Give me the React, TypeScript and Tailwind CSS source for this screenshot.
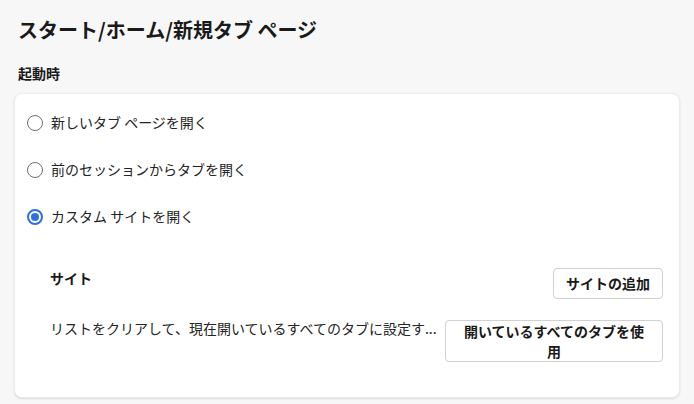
import { useState } from 'react';

const FONT = "font-['Noto_Sans_CJK_JP','Noto_Sans',sans-serif]";

const OPTIONS = [
  { id: 'newtab', label: '新しいタブ ページを開く' },
  { id: 'previous', label: '前のセッションからタブを開く' },
  { id: 'custom', label: 'カスタム サイトを開く' },
];

function Radio({ checked }: { checked: boolean }) {
  return checked ? (
    <span className="flex h-4 w-4 shrink-0 items-center justify-center rounded-full border-2 border-[#2f6fdf]">
      <span className="h-2 w-2 rounded-full bg-[#2f6fdf]" />
    </span>
  ) : (
    <span className="h-4 w-4 shrink-0 rounded-full border border-[#6f6f6f]" />
  );
}

export default function App() {
  const [selected, setSelected] = useState('custom');

  return (
    <div className={`min-h-[404px] bg-[#f7f7f7] px-[14px] pt-4 text-[#1a1a1a] ${FONT}`}>
      <h1 className="pl-1 text-[20px] font-bold leading-[28px]">スタート/ホーム/新規タブ ページ</h1>
      <h2 className="mt-[19px] mb-[10px] pl-1 text-[14px] font-bold leading-5">起動時</h2>

      <section className="w-[666px] rounded-lg border border-[#ececec] bg-white pt-[5px] pb-[35px] shadow-[0_1px_2px_rgba(0,0,0,0.12)]">
        {OPTIONS.map((o) => (
          <label
            key={o.id}
            onClick={() => setSelected(o.id)}
            className="flex h-[47px] cursor-pointer items-center gap-2 pl-3 text-[14px] text-[#242424]"
          >
            <Radio checked={selected === o.id} />
            {o.label}
          </label>
        ))}

        <div className="mt-[28px] pl-[35px] pr-4">
          <div className="flex items-start justify-between">
            <div className="text-[14px] font-bold leading-5">サイト</div>
            <button className="h-[31px] rounded border border-[#d1d1d1] bg-white px-3 text-[14px] font-bold text-[#1a1a1a]">
              サイトの追加
            </button>
          </div>
          <div className="mt-[21px] flex items-start justify-between gap-2">
            <p className="-mt-[2px] whitespace-nowrap text-[14px] leading-5 text-[#242424]">
              リストをクリアして、現在開いているすべてのタブに設定す...
            </p>
            <button className="w-[218px] shrink-0 rounded border border-[#d1d1d1] bg-white px-3 text-[14px] font-bold leading-5 text-[#1a1a1a]">
              開いているすべてのタブを使用
            </button>
          </div>
        </div>
      </section>
    </div>
  );
}
